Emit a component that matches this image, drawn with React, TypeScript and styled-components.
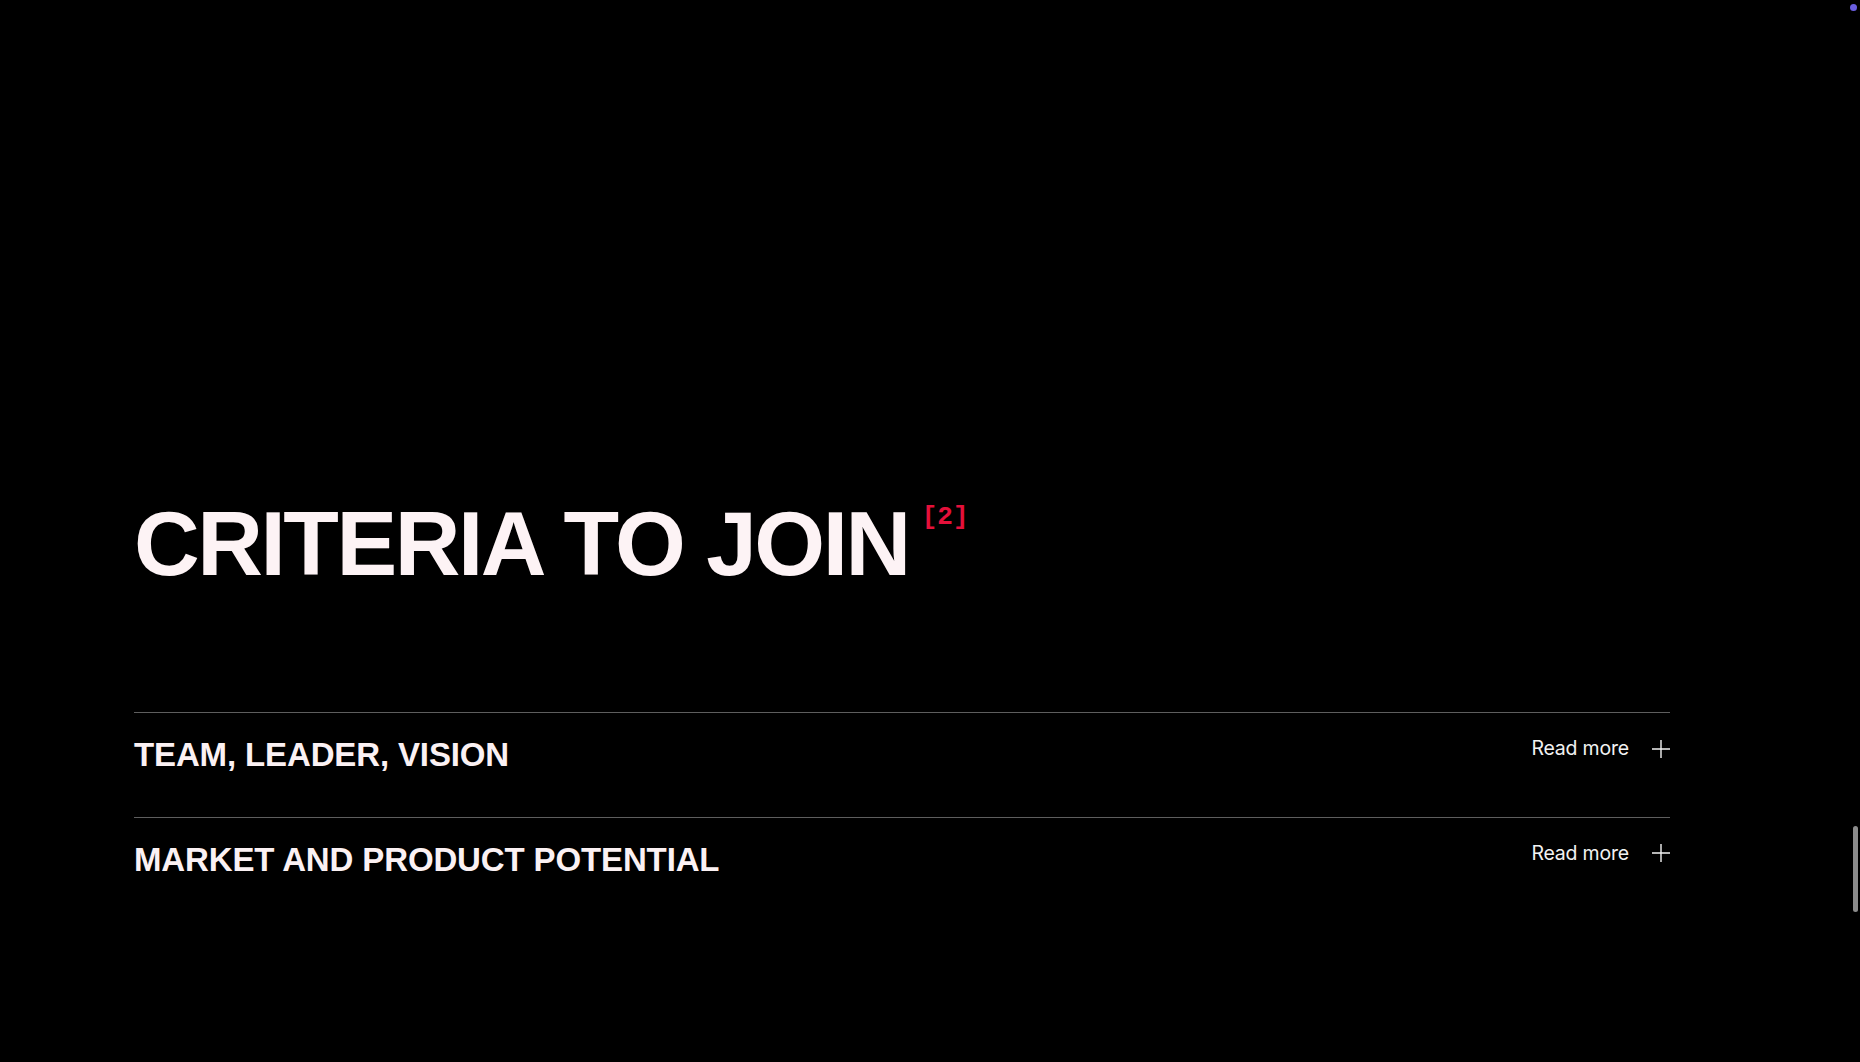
import React from "react";
import styled, { createGlobalStyle } from "styled-components";

const GlobalStyle = createGlobalStyle`
  html, body {
    margin: 0;
    padding: 0;
    background: #000;
    overflow: hidden;
  }
  body {
    font-family: "Liberation Sans", Arial, sans-serif;
    color: #fbf1f3;
  }
  * { box-sizing: border-box; }
`;

const Page = styled.main`
  width: 1860px;
  height: 1062px;
  background: #000;
  padding: 498px 190px 0 134px;
`;

const HeadingRow = styled.div`
  display: flex;
  align-items: flex-start;
  gap: 13px;
  margin-bottom: 123px;
`;

const Heading = styled.h1`
  margin: 0;
  font-family: "Liberation Sans", Arial, sans-serif;
  font-weight: 700;
  font-size: 91px;
  line-height: 1;
  letter-spacing: -0.027em;
  color: #fdf3f5;
  text-transform: uppercase;
`;

const Index = styled.span`
  font-family: "Liberation Mono", "DejaVu Sans Mono", monospace;
  font-weight: 700;
  font-size: 26px;
  line-height: 1;
  color: #e4103a;
  margin-top: 6px;
`;

const List = styled.section`
  display: flex;
  flex-direction: column;
`;

const Row = styled.div`
  display: flex;
  justify-content: space-between;
  align-items: flex-start;
  border-top: 1px solid #5e5e5e;
  padding: 22px 0 42px;
`;

const RowTitle = styled.h2`
  margin: 0;
  font-family: "Liberation Sans", Arial, sans-serif;
  font-weight: 700;
  font-size: 33px;
  line-height: 1.2;
  letter-spacing: -0.004em;
  color: #fbf1f3;
  text-transform: uppercase;
`;

const ReadMore = styled.button`
  display: flex;
  align-items: center;
  gap: 23px;
  background: none;
  border: 0;
  padding: 0;
  margin-top: 2px;
  cursor: pointer;
  font-family: Inter, "Liberation Sans", sans-serif;
  font-size: 19.5px;
  line-height: 1.2;
  font-weight: 400;
  letter-spacing: -0.01em;
  color: #f2f2f2;
`;

const PlusIcon = styled.svg`
  width: 18px;
  height: 18px;
  display: block;
`;

const ScrollThumb = styled.div`
  position: fixed;
  right: 2px;
  top: 826px;
  width: 5px;
  height: 86px;
  border-radius: 3px;
  background: #8c8c8c;
`;

const CursorDot = styled.div`
  position: fixed;
  right: 3px;
  top: 4px;
  width: 7px;
  height: 7px;
  border-radius: 50%;
  background: #6a5ee0;
  filter: blur(0.6px);
`;

const items = ["Team, leader, vision", "Market and product potential"];

export default function App() {
  return (
    <>
      <GlobalStyle />
      <Page>
        <HeadingRow>
          <Heading>Criteria to join</Heading>
          <Index>[2]</Index>
        </HeadingRow>
        <List>
          {items.map((item) => (
            <Row key={item}>
              <RowTitle>{item}</RowTitle>
              <ReadMore>
                Read more
                <PlusIcon viewBox="0 0 18 18" fill="none">
                  <path d="M9 0V18M0 9H18" stroke="#f2f2f2" strokeWidth="1.4" />
                </PlusIcon>
              </ReadMore>
            </Row>
          ))}
        </List>
      </Page>
      <ScrollThumb />
      <CursorDot />
    </>
  );
}
